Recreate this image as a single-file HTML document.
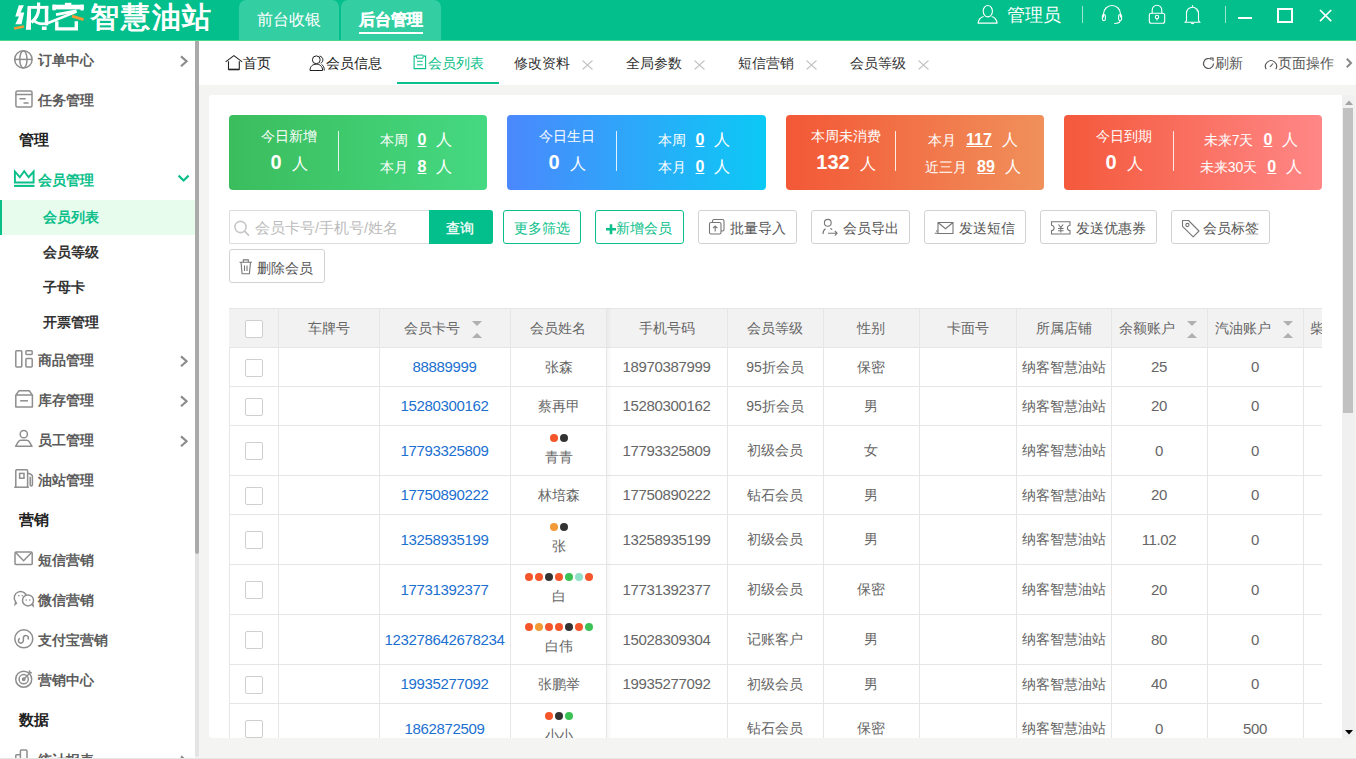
<!DOCTYPE html>
<html><head><meta charset="utf-8">
<style>
*{box-sizing:border-box;margin:0;padding:0}
html,body{width:1356px;height:759px;overflow:hidden;background:#f4f4f2;font-family:"Liberation Sans",sans-serif;color:#333}
.abs{position:absolute}
#top{position:absolute;left:0;top:0;width:1356px;height:41px;background:#02bf8b;border-bottom:1px solid #4ad88c}
#logo{position:absolute;left:14px;top:-3px;font-size:29px;font-weight:bold;color:#fff;white-space:nowrap;line-height:40px}
.ttab{position:absolute;top:0;height:40px;width:100px;background:#33cea2;border-radius:7px 7px 0 0;color:#fff;font-size:16px;text-align:center;line-height:40px}
#side{position:absolute;left:0;top:41px;width:195px;height:718px;background:#fff;overflow:hidden}
.mi{position:absolute;left:0;width:195px;height:40px;font-size:14px;color:#5c5c5c;font-weight:bold}
.mi .ic{position:absolute;left:0;top:0}
.mi .tx{position:absolute;left:38px;top:0;line-height:40px}
.mi .ar{position:absolute;left:178px;top:14px;width:10px;height:12px}
.grp{position:absolute;left:19px;font-size:15px;font-weight:bold;color:#222;line-height:40px}
.sub{position:absolute;left:43px;font-size:14px;font-weight:bold;color:#333;line-height:35px}
#tabs{position:absolute;left:199px;top:41px;width:1157px;height:44px;background:#fff}
.tb{position:absolute;top:0;height:44px;line-height:44px;font-size:14px;color:#333;white-space:nowrap}
.tb .x{position:absolute;top:0;color:#aaa;font-size:14px}
#card{position:absolute;left:209px;top:95px;width:1146px;height:643px;background:#fff;border-radius:3px;overflow:hidden}
.st{position:absolute;top:20px;height:75px;width:258px;border-radius:4px;color:#fff}
.st .t1{position:absolute;font-size:14px;white-space:nowrap}
.st .dv{position:absolute;left:109px;top:16px;width:1px;height:40px;background:rgba(255,255,255,.85)}
.btn{position:absolute;top:115px;height:34px;border:1px solid #ccc;border-radius:2px;background:#fff;font-size:14px;color:#555;white-space:nowrap}
.sl{position:absolute;left:0;width:120px;text-align:center;white-space:nowrap}
.bn{font-size:20px;font-weight:bold}
.ren{font-size:16px;margin-left:10px}
.sr{position:absolute;left:113px;width:148px;text-align:center;white-space:nowrap;font-size:14px;line-height:22px}
.sn{font-size:16px;font-weight:bold;text-decoration:underline;margin:0 10px 0 10px}
.ren2{font-size:16px}
.btn .bi{display:inline-block;vertical-align:middle;margin:-3px 5px 0 0;line-height:0}
.btn{text-align:center;line-height:32px;padding-top:2px}
.btn.g{border-color:#0bbf8a;color:#0bbf8a}
.bx{border:1px solid #d2d2d2;border-radius:3px;background:#fff}
.bx.g{border-color:#0bbf8a}
.bx.sinp{border-color:#ddd;border-right:0;border-radius:2px 0 0 2px}
.cell{position:absolute;display:flex;align-items:center;justify-content:center;padding-top:2px;font-size:14px;color:#666;white-space:nowrap}
.cb{width:18px;height:18px;border:1px solid #cfcfcf;border-radius:2px;background:#fff}
.num{font-size:15px;letter-spacing:-0.35px;position:relative;top:-1px}
.nm{text-align:center;line-height:17px}
.dots{position:absolute;left:2px;right:0;top:9px;display:flex;justify-content:center;gap:2px}
.nmt{position:absolute;left:2px;right:0;top:22px;line-height:20px;text-align:center}
.dots i{display:block;width:8px;height:8px;border-radius:50%}
.sort{position:relative;display:inline-block;width:10px;height:18px;margin-left:12px;margin-right:3px}
.sort .dn{position:absolute;left:0;top:1px;border:5px solid transparent;border-top:5px solid #b0b0b0;border-bottom:0}
.sort .up{position:absolute;left:0;top:13px;border:5px solid transparent;border-bottom:5px solid #b0b0b0;border-top:0}
</style></head><body>
<div id="top">
  <svg class="abs" style="left:0;top:0" width="90" height="36" viewBox="0 0 90 36">
<polygon points="18.8,5.3 23.9,5.3 20.5,12.6 24.2,12.6 21.5,24.2 15.3,24.2 19,16.4 15.3,16.4" fill="#fff"/>
<path d="M14.1 28.6L23.9 26.6" stroke="#f39a36" stroke-width="2.6"/>
<polygon points="27.6,6 31,6 31,29.8 25.9,29.8" fill="#fff"/>
<rect x="30" y="5.9" width="18.3" height="2.9" fill="#fff"/>
<rect x="44.8" y="5.9" width="3.5" height="19.5" fill="#fff"/>
<path d="M38.6 2.4V9C38.6 14 35.6 19 31.5 22.4" stroke="#fff" stroke-width="3.2" fill="none"/>
<path d="M34 20.8C37.5 24 43 25 50 22.3L76.5 11.6" stroke="#fff" stroke-width="2.6" fill="none"/>
<rect x="41.9" y="26.5" width="4.7" height="3.5" fill="#fff"/>
<rect x="64.9" y="2.8" width="6.5" height="2.5" fill="#fff"/>
<rect x="52.5" y="4.7" width="31.2" height="4.7" fill="#fff"/><rect x="52.5" y="4.7" width="3.2" height="5.6" fill="#fff"/><rect x="80.5" y="4.7" width="3.2" height="5.8" fill="#fff"/>
<path d="M56 14.6L76.5 10.9" stroke="#fff" stroke-width="2.8"/>
<path d="M56.8 21.2V28.9H76.3V21.2" stroke="#fff" stroke-width="3.4" fill="none"/>
<path d="M72 16.1L83.6 19.6" stroke="#f39a36" stroke-width="2.8"/>
</svg>
<div id="logo"><span style="position:absolute;left:76px;top:0;letter-spacing:1.8px">智慧油站</span></div>
  
  <svg class="abs" style="left:960px;top:0" width="250" height="40" viewBox="960 0 250 40" fill="none" stroke="#fff" stroke-width="1.1">
  <ellipse cx="987.8" cy="11.2" rx="4.6" ry="5.7"/>
  <path d="M983.6 16.5c-3 .8-5.1 3.1-5.4 6.6H997c-.3-3.5-2.4-5.8-5.4-6.6"/>
  <path d="M1103.5 17.5V14a8.5 8.5 0 0 1 17 0v3.5"/>
  <rect x="1102.4" y="14.6" width="3" height="6" rx="1.5"/>
  <rect x="1118.6" y="14.6" width="3" height="6" rx="1.5"/>
  <path d="M1120 20.8c0 1.8-1.6 2.7-5.8 2.7"/>
  <path d="M1152.2 13.3V10a4.8 4.8 0 0 1 9.6 0v3.3"/>
  <rect x="1149.3" y="13.3" width="15.4" height="10" rx="2"/>
  <circle cx="1157" cy="17" r="1.7"/>
  <path d="M1157 18.7v1.8"/>
  <path d="M1192.5 5.3v1.4M1186.5 20.5v-7.3a6 6 0 0 1 12 0v7.3l1.3 1.7h-14.6z"/>
  <path d="M1191 22.6a1.6 1.6 0 0 0 3 0"/>
  <path d="M1196 9.5c.8.6 1.2 1.4 1.4 2.2" stroke-width="0.8"/>
</svg>
  <div class="abs" style="left:1007px;top:3px;font-size:18px;color:#fff;line-height:24px">管理员</div>
  <div class="abs" style="left:1082px;top:6px;width:1px;height:17px;background:rgba(255,255,255,.6)"></div>
  <div class="abs" style="left:1225px;top:6px;width:1px;height:17px;background:rgba(255,255,255,.6)"></div>
  <div class="abs" style="left:1238px;top:17px;width:14px;height:2px;background:#fff"></div>
  <div class="abs" style="left:1277px;top:8px;width:16px;height:15px;border:2px solid #fff"></div>
  <svg class="abs" style="left:1318px;top:8px" width="15" height="15" viewBox="0 0 15 15"><path d="M2 2l11.2 11.2M13.2 2L2 13.2" stroke="#fff" stroke-width="1.7"/></svg>
  <div class="ttab" style="left:239px">前台收银</div>
  <div class="ttab" style="left:341px;font-weight:bold;-webkit-text-stroke:0.35px #fff">后台管理<div class="abs" style="left:18px;top:32px;width:64px;height:2px;background:#fff"></div></div>
</div>
<div id="side">
<div class="mi" style="top:-1px"><svg class="ic" width="40" height="40" viewBox="0 0 40 40"><circle cx="23.4" cy="19.4" r="8.7" stroke="#8e8e8e" stroke-width="1.5" fill="none"/><ellipse cx="23.4" cy="19.4" rx="3.6" ry="8.7" stroke="#8e8e8e" stroke-width="1.5" fill="none"/><path d="M14.7 19.4h17.4" stroke="#8e8e8e" stroke-width="1.5" fill="none"/></svg><span class="tx">订单中心</span><svg class="ic" width="195" height="40" viewBox="0 0 195 40"><path d="M181 16.4l5.6 4.9-5.6 4.9" stroke="#8a8a8a" stroke-width="2.1" fill="none"/></svg></div>
<div class="mi" style="top:39px"><svg class="ic" width="40" height="40" viewBox="0 0 40 40"><rect x="15.9" y="10.9" width="16.1" height="16.1" rx="1.5" stroke="#8e8e8e" stroke-width="1.5" fill="none"/><path d="M15.9 14.6h16.1M19.4 18.7h6.3M23.5 23h5.1" stroke="#8e8e8e" stroke-width="1.5" fill="none"/></svg><span class="tx">任务管理</span></div>
<div class="grp" style="top:79px">管理</div>
<div class="mi" style="top:119px;color:#0bbf8a"><svg class="ic" width="40" height="40" viewBox="0 0 40 40"><path d="M14.9 11.5V22.5H33.6V11.5L28.6 17.2L24.2 11.2L19.8 17.2Z" stroke="#0bbf8a" stroke-width="1.9" fill="none" stroke-linejoin="miter"/><path d="M14 25.9H34.5" stroke="#0bbf8a" stroke-width="2.1"/></svg><span class="tx">会员管理</span><svg class="ic" width="195" height="40" viewBox="0 0 195 40"><path d="M178.6 15.6l5 4.9 5-4.9" stroke="#0bbf8a" stroke-width="2.2" fill="none"/></svg></div>
<div class="abs" style="left:0;top:159px;width:195px;height:35px;background:#e8fcee;border-left:2px solid #0bbf8a"></div>
<div class="sub" style="top:159px;color:#0bbf8a">会员列表</div>
<div class="sub" style="top:194px">会员等级</div>
<div class="sub" style="top:229px">子母卡</div>
<div class="sub" style="top:264px">开票管理</div>
<div class="mi" style="top:299px"><svg class="ic" width="40" height="40" viewBox="0 0 40 40"><rect x="15.8" y="10.7" width="6" height="16.2" rx=".8" stroke="#8e8e8e" stroke-width="1.5" fill="none"/><rect x="25.9" y="10.7" width="6.3" height="3.7" rx=".8" stroke="#8e8e8e" stroke-width="1.5" fill="none"/><rect x="25.9" y="18.6" width="6.3" height="8.3" rx=".8" stroke="#8e8e8e" stroke-width="1.5" fill="none"/></svg><span class="tx">商品管理</span><svg class="ic" width="195" height="40" viewBox="0 0 195 40"><path d="M181 16.4l5.6 4.9-5.6 4.9" stroke="#8a8a8a" stroke-width="2.1" fill="none"/></svg></div>
<div class="mi" style="top:339px"><svg class="ic" width="40" height="40" viewBox="0 0 40 40"><path d="M19 10.7h10.2l3.2 4.4H15.8z" stroke="#8e8e8e" stroke-width="1.5" fill="none" stroke-linejoin="round"/><path d="M15.8 15.1v11.8h16.6V15.1" stroke="#8e8e8e" stroke-width="1.5" fill="none" stroke-linejoin="round"/><path d="M20.1 20.8h7.9" stroke="#8e8e8e" stroke-width="1.5" fill="none"/></svg><span class="tx">库存管理</span><svg class="ic" width="195" height="40" viewBox="0 0 195 40"><path d="M181 16.4l5.6 4.9-5.6 4.9" stroke="#8a8a8a" stroke-width="2.1" fill="none"/></svg></div>
<div class="mi" style="top:379px"><svg class="ic" width="40" height="40" viewBox="0 0 40 40"><circle cx="23.8" cy="14.2" r="3.6" stroke="#8e8e8e" stroke-width="1.5" fill="none"/><path d="M15.6 26.3l2.6-4.4c.6-1 1.6-1.6 2.8-1.6h5.6c1.2 0 2.2.6 2.8 1.6l2.6 4.4z" stroke="#8e8e8e" stroke-width="1.5" fill="none" stroke-linejoin="round"/></svg><span class="tx">员工管理</span><svg class="ic" width="195" height="40" viewBox="0 0 195 40"><path d="M181 16.4l5.6 4.9-5.6 4.9" stroke="#8a8a8a" stroke-width="2.1" fill="none"/></svg></div>
<div class="mi" style="top:419px"><svg class="ic" width="40" height="40" viewBox="0 0 40 40"><path d="M15.8 27.2V10.8a1 1 0 0 1 1-1h9.8a1 1 0 0 1 1 1v16.4" stroke="#8e8e8e" stroke-width="1.5" fill="none"/><rect x="19.6" y="13.4" width="4.4" height="4.8" stroke="#8e8e8e" stroke-width="1.5" fill="none"/><path d="M14.2 27.2h14.6" stroke="#8e8e8e" stroke-width="1.5" fill="none"/><path d="M27.6 13.2c1.8.3 4.8 1.2 4.8 3.2v8c0 1-.5 1.5-1.1 1.5s-1.1-.5-1.1-1.5v-7.6" stroke="#8e8e8e" stroke-width="1.5" fill="none"/></svg><span class="tx">油站管理</span></div>
<div class="grp" style="top:459px">营销</div>
<div class="mi" style="top:499px"><svg class="ic" width="40" height="40" viewBox="0 0 40 40"><rect x="15" y="12" width="17.2" height="12.6" rx="1.2" stroke="#8e8e8e" stroke-width="1.5" fill="none"/><path d="M15.6 12.6l8 8.2 8-8.2" stroke="#8e8e8e" stroke-width="1.5" fill="none"/></svg><span class="tx">短信营销</span></div>
<div class="mi" style="top:539px"><svg class="ic" width="40" height="40" viewBox="0 0 40 40"><path d="M17 22.6l-1.8 1.6.4-2.4a6.3 6.3 0 1 1 11.2-3.6" stroke="#8e8e8e" stroke-width="1.5" fill="none"/><path d="M31.6 24.4l1.6 1.5-.3-2.2" stroke="#8e8e8e" stroke-width="1.4" fill="#fff"/><circle cx="28" cy="20.4" r="5.5" fill="#fff"/><circle cx="28" cy="20.4" r="5.5" stroke="#8e8e8e" stroke-width="1.5" fill="none"/><circle cx="18.8" cy="15.8" r=".8" fill="#8e8e8e"/><circle cx="22.4" cy="15.8" r=".8" fill="#8e8e8e"/><circle cx="26.2" cy="20" r=".8" fill="#8e8e8e"/><circle cx="29.8" cy="20" r=".8" fill="#8e8e8e"/></svg><span class="tx">微信营销</span></div>
<div class="mi" style="top:579px"><svg class="ic" width="40" height="40" viewBox="0 0 40 40"><circle cx="23.8" cy="18.8" r="9" stroke="#8e8e8e" stroke-width="1.5" fill="none"/><path d="M19.4 18.6A2.5 2.5 0 1 0 23.4 20.6V17.2A2.5 2.5 0 1 1 28.2 18.9" stroke="#8e8e8e" stroke-width="1.5" fill="none" stroke-linecap="round"/></svg><span class="tx">支付宝营销</span></div>
<div class="mi" style="top:619px"><svg class="ic" width="40" height="40" viewBox="0 0 40 40"><circle cx="23.7" cy="19.2" r="8" stroke="#8e8e8e" stroke-width="1.5" fill="none"/><circle cx="23.7" cy="19.2" r="4.6" stroke="#8e8e8e" stroke-width="1.5" fill="none"/><circle cx="23.7" cy="19.2" r="1.2" fill="#8e8e8e" stroke="#8e8e8e" stroke-width="1.5" fill="none"/><path d="M23.7 19.2l7.2-7.2M29.4 10.4l.2 2.2 2.2.2" stroke="#8e8e8e" stroke-width="1.5" fill="none"/></svg><span class="tx">营销中心</span></div>
<div class="grp" style="top:659px">数据</div>
<div class="mi" style="top:699px"><svg class="ic" width="40" height="40" viewBox="0 0 40 40"><path d="M15.8 28V15.8a1 1 0 0 1 1-1h3.6M20.4 28V11a1 1 0 0 1 1-1h4.6a1 1 0 0 1 1 1v17" stroke="#8e8e8e" stroke-width="1.5" fill="none"/></svg><span class="tx">统计报表</span><svg class="ic" width="195" height="40" viewBox="0 0 195 40"><path d="M181 16.4l5.6 4.9-5.6 4.9" stroke="#8a8a8a" stroke-width="2.1" fill="none"/></svg></div>
</div><!--side-->
<div class="abs" style="left:195px;top:41px;width:4px;height:716px;background:#e4e4e4;border-radius:0 0 2px 2px"></div><div class="abs" style="left:195px;top:41px;width:4px;height:513px;background:#aaa;border-radius:0 0 2px 2px"></div><div class="abs" style="left:0;top:758px;width:1356px;height:1px;background:#e6e6e6"></div>
<div id="tabs">
<svg class="abs" style="left:0;top:0" width="240" height="44" viewBox="0 0 240 44" fill="none">
<path d="M26.6 20.9L34.9 14.6L43.2 20.9" stroke="#222" stroke-width="1.1"/>
<path d="M29.5 20.2V28.3H40.3V20.2" stroke="#222" stroke-width="1.1"/>
<path d="M29.5 28.6H40.3" stroke="#222" stroke-width="1.4"/>
<circle cx="117.3" cy="18.8" r="3.9" stroke="#222" stroke-width="1"/>
<path d="M111 29.5c0-4.2 2.7-6.3 6.3-6.3s6.3 2.1 6.3 6.3z" stroke="#222" stroke-width="1"/>
<path d="M120.6 15.1c1.8.2 3.3 1.8 3.3 3.7 0 1.5-.9 2.8-2.2 3.4M122.6 23.5c1.6.8 2.7 2.9 2.7 6" stroke="#222" stroke-width="1"/>
<path d="M217 15.1H215.1V27.6H226.6V15.1H224.7" stroke="#0bbf8a" stroke-width="1.1"/>
<path d="M217.6 14.1H224.1V17.2H217.6z" stroke="#0bbf8a" stroke-width="1"/>
<path d="M218 20.3H223.7M218 23.8H223.7" stroke="#0bbf8a" stroke-width="1"/>
</svg>
<div class="tb" style="left:44px;color:#222">首页</div>
<div class="tb" style="left:127px;color:#222">会员信息</div>
<div class="tb" style="left:229px;color:#0bbf8a">会员列表</div>
<div class="abs" style="left:198px;top:41px;width:102px;height:2px;background:#0bbf8a"></div>
<div class="tb" style="left:315px">修改资料<svg class="abs" style="left:68px;top:19px" width="11" height="10" viewBox="0 0 11 10"><path d="M0.5 0.5l10 9M10.5 0.5l-10 9" stroke="#c4c4c4" stroke-width="1.1"/></svg></div>
<div class="tb" style="left:427px">全局参数<svg class="abs" style="left:68px;top:19px" width="11" height="10" viewBox="0 0 11 10"><path d="M0.5 0.5l10 9M10.5 0.5l-10 9" stroke="#c4c4c4" stroke-width="1.1"/></svg></div>
<div class="tb" style="left:539px">短信营销<svg class="abs" style="left:68px;top:19px" width="11" height="10" viewBox="0 0 11 10"><path d="M0.5 0.5l10 9M10.5 0.5l-10 9" stroke="#c4c4c4" stroke-width="1.1"/></svg></div>
<div class="tb" style="left:651px">会员等级<svg class="abs" style="left:68px;top:19px" width="11" height="10" viewBox="0 0 11 10"><path d="M0.5 0.5l10 9M10.5 0.5l-10 9" stroke="#c4c4c4" stroke-width="1.1"/></svg></div>
<div class="tb" style="left:1003px;color:#555"><svg class="abs" style="left:0;top:16px" width="13" height="13" viewBox="0 0 13 13"><path d="M11.5 6.5A5 5 0 1 1 9.5 2.5" stroke="#555" stroke-width="1.2" fill="none"/><path d="M8 1h3v3" stroke="#555" stroke-width="1.2" fill="none"/></svg><span style="margin-left:13px">刷新</span></div>
<div class="tb" style="left:1065px;color:#555"><svg class="abs" style="left:0;top:16px" width="14" height="13" viewBox="0 0 14 13"><path d="M2.2 12.2A5.6 5.6 0 1 1 11.8 12.2" stroke="#555" stroke-width="1.1" fill="none"/><path d="M6 10l3-3.5" stroke="#555" stroke-width="1.1" fill="none"/></svg><span style="margin-left:14px">页面操作</span></div>
<svg class="abs" style="left:1146px;top:16px" width="8" height="12" viewBox="0 0 8 12"><path d="M1.8 1.8l4.2 4.2-4.2 4.2" stroke="#888" stroke-width="2" fill="none"/></svg>
</div>
<div id="card">
<div class="st" style="left:20px;background:linear-gradient(90deg,#3bbd5d,#45d982);width:258px">
<div class="sl t1" style="top:13px">今日新增</div>
<div class="sl" style="top:36px"><b class="bn">0</b><span class="ren">人</span></div>
<div class="dv"></div>
<div class="sr" style="top:14px"><span class="lb">本周</span><b class="sn">0</b><span class="ren2">人</span></div>
<div class="sr" style="top:41px"><span class="lb">本月</span><b class="sn">8</b><span class="ren2">人</span></div>
</div>
<div class="st" style="left:298px;background:linear-gradient(90deg,#4b88fd,#0cc9f5);width:259px">
<div class="sl t1" style="top:13px">今日生日</div>
<div class="sl" style="top:36px"><b class="bn">0</b><span class="ren">人</span></div>
<div class="dv"></div>
<div class="sr" style="top:14px"><span class="lb">本周</span><b class="sn">0</b><span class="ren2">人</span></div>
<div class="sr" style="top:41px"><span class="lb">本月</span><b class="sn">0</b><span class="ren2">人</span></div>
</div>
<div class="st" style="left:577px;background:linear-gradient(90deg,#f35836,#f0905a);width:258px">
<div class="sl t1" style="top:13px">本周未消费</div>
<div class="sl" style="top:36px"><b class="bn">132</b><span class="ren">人</span></div>
<div class="dv"></div>
<div class="sr" style="top:14px"><span class="lb">本月</span><b class="sn">117</b><span class="ren2">人</span></div>
<div class="sr" style="top:41px"><span class="lb">近三月</span><b class="sn">89</b><span class="ren2">人</span></div>
</div>
<div class="st" style="left:855px;background:linear-gradient(90deg,#f4593b,#ff8787);width:258px">
<div class="sl t1" style="top:13px">今日到期</div>
<div class="sl" style="top:36px"><b class="bn">0</b><span class="ren">人</span></div>
<div class="dv"></div>
<div class="sr" style="top:14px"><span class="lb">未来7天</span><b class="sn">0</b><span class="ren2">人</span></div>
<div class="sr" style="top:41px"><span class="lb">未来30天</span><b class="sn">0</b><span class="ren2">人</span></div>
</div>
<div class="abs bx sinp" style="left:20px;top:115px;width:201px;height:34px"></div>
<div class="abs" style="left:220px;top:115px;width:64px;height:34px;background:#02bf8b;border-radius:0 3px 3px 0"></div>
<div class="abs bx g" style="left:294px;top:115px;width:78px;height:34px"></div>
<div class="abs bx g" style="left:386px;top:115px;width:89px;height:34px"></div>
<div class="abs bx" style="left:489px;top:115px;width:99px;height:34px"></div>
<div class="abs bx" style="left:602px;top:115px;width:99px;height:34px"></div>
<div class="abs bx" style="left:715px;top:115px;width:102px;height:34px"></div>
<div class="abs bx" style="left:831px;top:115px;width:117px;height:34px"></div>
<div class="abs bx" style="left:962px;top:115px;width:99px;height:34px"></div>
<div class="abs bx" style="left:20px;top:154px;width:96px;height:34px"></div>
<div class="abs" style="left:46px;top:123px;font-size:14px;line-height:20px;color:#bbb;white-space:nowrap;font-size:14.5px">会员卡号/手机号/姓名</div>
<div class="abs" style="left:237px;top:123px;font-size:14px;line-height:20px;color:#fff;white-space:nowrap;-webkit-text-stroke:0.3px #fff">查询</div>
<div class="abs" style="left:304.5px;top:123px;font-size:14px;line-height:20px;color:#0bbf8a;white-space:nowrap;">更多筛选</div>
<svg class="abs" style="left:396px;top:128px" width="12" height="12" viewBox="0 0 12 12"><path d="M1 6.2h10M6 1.2v10" stroke="#0bbf8a" stroke-width="2.6"/></svg>
<div class="abs" style="left:407px;top:123px;font-size:14px;line-height:20px;color:#0bbf8a;white-space:nowrap;">新增会员</div>
<div class="abs" style="left:521px;top:123px;font-size:14px;line-height:20px;color:#555;white-space:nowrap;">批量导入</div>
<div class="abs" style="left:633.5px;top:123px;font-size:14px;line-height:20px;color:#555;white-space:nowrap;">会员导出</div>
<div class="abs" style="left:750px;top:123px;font-size:14px;line-height:20px;color:#555;white-space:nowrap;">发送短信</div>
<div class="abs" style="left:867px;top:123px;font-size:14px;line-height:20px;color:#555;white-space:nowrap;">发送优惠券</div>
<div class="abs" style="left:994px;top:123px;font-size:14px;line-height:20px;color:#555;white-space:nowrap;">会员标签</div>
<div class="abs" style="left:48px;top:163px;font-size:14px;line-height:20px;color:#555;white-space:nowrap;">删除会员</div>
<svg class="abs" style="left:0;top:0" width="1146" height="200" viewBox="209 95 1146 200">
<circle cx="240.5" cy="227" r="5.6" stroke="#c8c8c8" stroke-width="1.6" fill="none"/><path d="M244.6 231.2l4.4 4.4" stroke="#c8c8c8" stroke-width="1.8"/>
<rect x="709.5" y="222.5" width="11.5" height="11.5" rx="1.5" stroke="#777" stroke-width="1.1" fill="none"/><path d="M712.5 222.5v-1.5a1.5 1.5 0 0 1 1.5-1.5h8.5a1.5 1.5 0 0 1 1.5 1.5v8.5a1.5 1.5 0 0 1-1.5 1.5H721" stroke="#777" stroke-width="1.1" fill="none"/><path d="M715.2 231.5v-5.5M713 228.2l2.2-2.2 2.2 2.2" stroke="#777" stroke-width="1.1" fill="none"/>
<circle cx="827.8" cy="222.8" r="3.4" stroke="#777" stroke-width="1.1" fill="none"/><path d="M823 234c0-2.8 1-4.2 2.5-5.2M830.3 228.4c.8.3 1.4.7 1.8 1.2M828 233.3h9M834.8 231l2.3 2.3-2.3 2.3" stroke="#777" stroke-width="1.1" fill="none"/>
<path d="M938 222.5h15v11H938zM938 222.5l7.5 6.2 7.5-6.2M934.7 233.3h3M936 231h2" stroke="#777" stroke-width="1.1" fill="none"/>
<path d="M1051.5 221.8h18.5v3.5a2.6 2.6 0 0 0 0 5.2v3.5h-18.5v-3.5a2.6 2.6 0 0 0 0-5.2z" stroke="#777" stroke-width="1.1" fill="none"/><path d="M1058.5 224.5l2.3 3 2.3-3M1058 228.5h5.6M1058 230.8h5.6M1060.8 227.5v5" stroke="#777" stroke-width="1.1" fill="none"/>
<path d="M1182.5 220.5h6l10.5 10.5-5.8 5.8-10.7-10.5z" stroke="#777" stroke-width="1.1" fill="none" stroke-linejoin="round"/><circle cx="1187.4" cy="225" r="1.6" stroke="#777" stroke-width="1.1" fill="none"/>
<path d="M239.5 262.2h12.5M243.3 262.2v-2.3h5v2.3M241 262.2l1.1 11.5h7.3l1.1-11.5M244.5 265.5v5.5M247 265.5v5.5" stroke="#777" stroke-width="1.1" fill="none"/>
</svg>
<div class="abs" style="left:20px;top:213px;width:1093px;height:430px;overflow:hidden">
<div class="abs" style="left:0;top:0;width:1px;height:450px;background:#e6e6e6"></div>
<div class="abs" style="left:0;top:0;width:1200px;height:39px;background:#f2f2f2;border-top:1px solid #e6e6e6"></div>
<div class="abs" style="left:0;top:39px;width:1200px;height:1px;background:#e6e6e6"></div>
<div class="abs" style="left:0;top:78px;width:1200px;height:1px;background:#e6e6e6"></div>
<div class="abs" style="left:0;top:117px;width:1200px;height:1px;background:#e6e6e6"></div>
<div class="abs" style="left:0;top:167px;width:1200px;height:1px;background:#e6e6e6"></div>
<div class="abs" style="left:0;top:206px;width:1200px;height:1px;background:#e6e6e6"></div>
<div class="abs" style="left:0;top:256px;width:1200px;height:1px;background:#e6e6e6"></div>
<div class="abs" style="left:0;top:306px;width:1200px;height:1px;background:#e6e6e6"></div>
<div class="abs" style="left:0;top:356px;width:1200px;height:1px;background:#e6e6e6"></div>
<div class="abs" style="left:0;top:395px;width:1200px;height:1px;background:#e6e6e6"></div>
<div class="abs" style="left:0;top:445px;width:1200px;height:1px;background:#e6e6e6"></div>
<div class="abs" style="left:49px;top:0;width:1px;height:450px;background:#e6e6e6"></div>
<div class="abs" style="left:150px;top:0;width:1px;height:450px;background:#e6e6e6"></div>
<div class="abs" style="left:281px;top:0;width:1px;height:450px;background:#e6e6e6"></div>
<div class="abs" style="left:377px;top:0;width:1px;height:450px;background:#e6e6e6"></div>
<div class="abs" style="left:498px;top:0;width:1px;height:450px;background:#e6e6e6"></div>
<div class="abs" style="left:594px;top:0;width:1px;height:450px;background:#e6e6e6"></div>
<div class="abs" style="left:690px;top:0;width:1px;height:450px;background:#e6e6e6"></div>
<div class="abs" style="left:787px;top:0;width:1px;height:450px;background:#e6e6e6"></div>
<div class="abs" style="left:882px;top:0;width:1px;height:450px;background:#e6e6e6"></div>
<div class="abs" style="left:978px;top:0;width:1px;height:450px;background:#e6e6e6"></div>
<div class="abs" style="left:1074px;top:0;width:1px;height:450px;background:#e6e6e6"></div>
<div class="abs" style="left:1169px;top:0;width:1px;height:450px;background:#e6e6e6"></div>
<div class="abs" style="left:378px;top:0;width:5px;height:450px;background:linear-gradient(90deg,rgba(0,0,0,.035),rgba(0,0,0,0))"></div>
<div class="cell" style="left:0px;top:0px;width:49px;height:39px;color:#666"><div class="cb"></div></div>
<div class="cell" style="left:49px;top:0px;width:101px;height:39px;color:#666">车牌号</div>
<div class="cell" style="left:150px;top:0px;width:131px;height:39px;color:#666">会员卡号<span class="sort"><i class="dn"></i><i class="up"></i></span></div>
<div class="cell" style="left:281px;top:0px;width:96px;height:39px;color:#666">会员姓名</div>
<div class="cell" style="left:377px;top:0px;width:121px;height:39px;color:#666">手机号码</div>
<div class="cell" style="left:498px;top:0px;width:96px;height:39px;color:#666">会员等级</div>
<div class="cell" style="left:594px;top:0px;width:96px;height:39px;color:#666">性别</div>
<div class="cell" style="left:690px;top:0px;width:97px;height:39px;color:#666">卡面号</div>
<div class="cell" style="left:787px;top:0px;width:95px;height:39px;color:#666">所属店铺</div>
<div class="cell" style="left:882px;top:0px;width:96px;height:39px;color:#666">余额账户<span class="sort"><i class="dn"></i><i class="up"></i></span></div>
<div class="cell" style="left:978px;top:0px;width:96px;height:39px;color:#666">汽油账户<span class="sort"><i class="dn"></i><i class="up"></i></span></div>
<div class="cell" style="left:1074px;top:0px;width:95px;height:39px;color:#666">柴油账户<span class="sort"><i class="dn"></i><i class="up"></i></span></div>
<div class="cell" style="left:0px;top:39px;width:49px;height:39px;"><div class="cb"></div></div>
<div class="cell" style="left:150px;top:39px;width:131px;height:39px;"><span class="num" style="color:#1b70d0">88889999</span></div>
<div class="cell" style="left:281px;top:39px;width:96px;height:39px;padding-left:2px">张森</div>
<div class="cell" style="left:377px;top:39px;width:121px;height:39px;"><span class="num">18970387999</span></div>
<div class="cell" style="left:498px;top:39px;width:96px;height:39px;">95折会员</div>
<div class="cell" style="left:594px;top:39px;width:96px;height:39px;">保密</div>
<div class="cell" style="left:787px;top:39px;width:95px;height:39px;">纳客智慧油站</div>
<div class="cell" style="left:882px;top:39px;width:96px;height:39px;"><span class="num">25</span></div>
<div class="cell" style="left:978px;top:39px;width:96px;height:39px;"><span class="num">0</span></div>
<div class="cell" style="left:0px;top:78px;width:49px;height:39px;"><div class="cb"></div></div>
<div class="cell" style="left:150px;top:78px;width:131px;height:39px;"><span class="num" style="color:#1b70d0">15280300162</span></div>
<div class="cell" style="left:281px;top:78px;width:96px;height:39px;padding-left:2px">蔡再甲</div>
<div class="cell" style="left:377px;top:78px;width:121px;height:39px;"><span class="num">15280300162</span></div>
<div class="cell" style="left:498px;top:78px;width:96px;height:39px;">95折会员</div>
<div class="cell" style="left:594px;top:78px;width:96px;height:39px;">男</div>
<div class="cell" style="left:787px;top:78px;width:95px;height:39px;">纳客智慧油站</div>
<div class="cell" style="left:882px;top:78px;width:96px;height:39px;"><span class="num">20</span></div>
<div class="cell" style="left:978px;top:78px;width:96px;height:39px;"><span class="num">0</span></div>
<div class="cell" style="left:0px;top:117px;width:49px;height:50px;"><div class="cb"></div></div>
<div class="cell" style="left:150px;top:117px;width:131px;height:50px;"><span class="num" style="color:#1b70d0">17793325809</span></div>
<div class="cell" style="left:281px;top:117px;width:96px;height:50px;padding-left:2px"><div class="dots"><i style="background:#f4552a"></i><i style="background:#333"></i></div><div class="nmt">青青</div></div>
<div class="cell" style="left:377px;top:117px;width:121px;height:50px;"><span class="num">17793325809</span></div>
<div class="cell" style="left:498px;top:117px;width:96px;height:50px;">初级会员</div>
<div class="cell" style="left:594px;top:117px;width:96px;height:50px;">女</div>
<div class="cell" style="left:787px;top:117px;width:95px;height:50px;">纳客智慧油站</div>
<div class="cell" style="left:882px;top:117px;width:96px;height:50px;"><span class="num">0</span></div>
<div class="cell" style="left:978px;top:117px;width:96px;height:50px;"><span class="num">0</span></div>
<div class="cell" style="left:0px;top:167px;width:49px;height:39px;"><div class="cb"></div></div>
<div class="cell" style="left:150px;top:167px;width:131px;height:39px;"><span class="num" style="color:#1b70d0">17750890222</span></div>
<div class="cell" style="left:281px;top:167px;width:96px;height:39px;padding-left:2px">林培森</div>
<div class="cell" style="left:377px;top:167px;width:121px;height:39px;"><span class="num">17750890222</span></div>
<div class="cell" style="left:498px;top:167px;width:96px;height:39px;">钻石会员</div>
<div class="cell" style="left:594px;top:167px;width:96px;height:39px;">男</div>
<div class="cell" style="left:787px;top:167px;width:95px;height:39px;">纳客智慧油站</div>
<div class="cell" style="left:882px;top:167px;width:96px;height:39px;"><span class="num">20</span></div>
<div class="cell" style="left:978px;top:167px;width:96px;height:39px;"><span class="num">0</span></div>
<div class="cell" style="left:0px;top:206px;width:49px;height:50px;"><div class="cb"></div></div>
<div class="cell" style="left:150px;top:206px;width:131px;height:50px;"><span class="num" style="color:#1b70d0">13258935199</span></div>
<div class="cell" style="left:281px;top:206px;width:96px;height:50px;padding-left:2px"><div class="dots"><i style="background:#f29a36"></i><i style="background:#333"></i></div><div class="nmt">张</div></div>
<div class="cell" style="left:377px;top:206px;width:121px;height:50px;"><span class="num">13258935199</span></div>
<div class="cell" style="left:498px;top:206px;width:96px;height:50px;">初级会员</div>
<div class="cell" style="left:594px;top:206px;width:96px;height:50px;">男</div>
<div class="cell" style="left:787px;top:206px;width:95px;height:50px;">纳客智慧油站</div>
<div class="cell" style="left:882px;top:206px;width:96px;height:50px;"><span class="num">11.02</span></div>
<div class="cell" style="left:978px;top:206px;width:96px;height:50px;"><span class="num">0</span></div>
<div class="cell" style="left:0px;top:256px;width:49px;height:50px;"><div class="cb"></div></div>
<div class="cell" style="left:150px;top:256px;width:131px;height:50px;"><span class="num" style="color:#1b70d0">17731392377</span></div>
<div class="cell" style="left:281px;top:256px;width:96px;height:50px;padding-left:2px"><div class="dots"><i style="background:#f4552a"></i><i style="background:#f4552a"></i><i style="background:#333"></i><i style="background:#f4552a"></i><i style="background:#3bc255"></i><i style="background:#8fe0c6"></i><i style="background:#f4552a"></i></div><div class="nmt">白</div></div>
<div class="cell" style="left:377px;top:256px;width:121px;height:50px;"><span class="num">17731392377</span></div>
<div class="cell" style="left:498px;top:256px;width:96px;height:50px;">初级会员</div>
<div class="cell" style="left:594px;top:256px;width:96px;height:50px;">保密</div>
<div class="cell" style="left:787px;top:256px;width:95px;height:50px;">纳客智慧油站</div>
<div class="cell" style="left:882px;top:256px;width:96px;height:50px;"><span class="num">20</span></div>
<div class="cell" style="left:978px;top:256px;width:96px;height:50px;"><span class="num">0</span></div>
<div class="cell" style="left:0px;top:306px;width:49px;height:50px;"><div class="cb"></div></div>
<div class="cell" style="left:150px;top:306px;width:131px;height:50px;"><span class="num" style="color:#1b70d0">123278642678234</span></div>
<div class="cell" style="left:281px;top:306px;width:96px;height:50px;padding-left:2px"><div class="dots"><i style="background:#f4552a"></i><i style="background:#f29a36"></i><i style="background:#f4552a"></i><i style="background:#f4552a"></i><i style="background:#333"></i><i style="background:#f4552a"></i><i style="background:#3bc255"></i></div><div class="nmt">白伟</div></div>
<div class="cell" style="left:377px;top:306px;width:121px;height:50px;"><span class="num">15028309304</span></div>
<div class="cell" style="left:498px;top:306px;width:96px;height:50px;">记账客户</div>
<div class="cell" style="left:594px;top:306px;width:96px;height:50px;">男</div>
<div class="cell" style="left:787px;top:306px;width:95px;height:50px;">纳客智慧油站</div>
<div class="cell" style="left:882px;top:306px;width:96px;height:50px;"><span class="num">80</span></div>
<div class="cell" style="left:978px;top:306px;width:96px;height:50px;"><span class="num">0</span></div>
<div class="cell" style="left:0px;top:356px;width:49px;height:39px;"><div class="cb"></div></div>
<div class="cell" style="left:150px;top:356px;width:131px;height:39px;"><span class="num" style="color:#1b70d0">19935277092</span></div>
<div class="cell" style="left:281px;top:356px;width:96px;height:39px;padding-left:2px">张鹏举</div>
<div class="cell" style="left:377px;top:356px;width:121px;height:39px;"><span class="num">19935277092</span></div>
<div class="cell" style="left:498px;top:356px;width:96px;height:39px;">初级会员</div>
<div class="cell" style="left:594px;top:356px;width:96px;height:39px;">男</div>
<div class="cell" style="left:787px;top:356px;width:95px;height:39px;">纳客智慧油站</div>
<div class="cell" style="left:882px;top:356px;width:96px;height:39px;"><span class="num">40</span></div>
<div class="cell" style="left:978px;top:356px;width:96px;height:39px;"><span class="num">0</span></div>
<div class="cell" style="left:0px;top:395px;width:49px;height:50px;"><div class="cb"></div></div>
<div class="cell" style="left:150px;top:395px;width:131px;height:50px;"><span class="num" style="color:#1b70d0">1862872509</span></div>
<div class="cell" style="left:281px;top:395px;width:96px;height:50px;padding-left:2px"><div class="dots"><i style="background:#f4552a"></i><i style="background:#333"></i><i style="background:#3bc255"></i></div><div class="nmt">小小</div></div>
<div class="cell" style="left:377px;top:395px;width:121px;height:50px;"><span class="num"></span></div>
<div class="cell" style="left:498px;top:395px;width:96px;height:50px;">钻石会员</div>
<div class="cell" style="left:594px;top:395px;width:96px;height:50px;">保密</div>
<div class="cell" style="left:787px;top:395px;width:95px;height:50px;">纳客智慧油站</div>
<div class="cell" style="left:882px;top:395px;width:96px;height:50px;"><span class="num">0</span></div>
<div class="cell" style="left:978px;top:395px;width:96px;height:50px;"><span class="num">500</span></div>
</div>
<div class="abs" style="left:1133px;top:0;width:13px;height:643px;background:#f0f0f0"></div>
<div class="abs" style="left:1134px;top:13px;width:10px;height:305px;background:#c1c1c1"></div>
<svg class="abs" style="left:1136px;top:5px" width="8" height="5" viewBox="0 0 8 5"><path d="M0 5L4 0.5 8 5z" fill="#a3a3a3"/></svg>
<svg class="abs" style="left:1136px;top:635px" width="8" height="5" viewBox="0 0 8 5"><path d="M0 0L4 4.5 8 0z" fill="#000"/></svg>
</div><!--card-->
</body></html>
